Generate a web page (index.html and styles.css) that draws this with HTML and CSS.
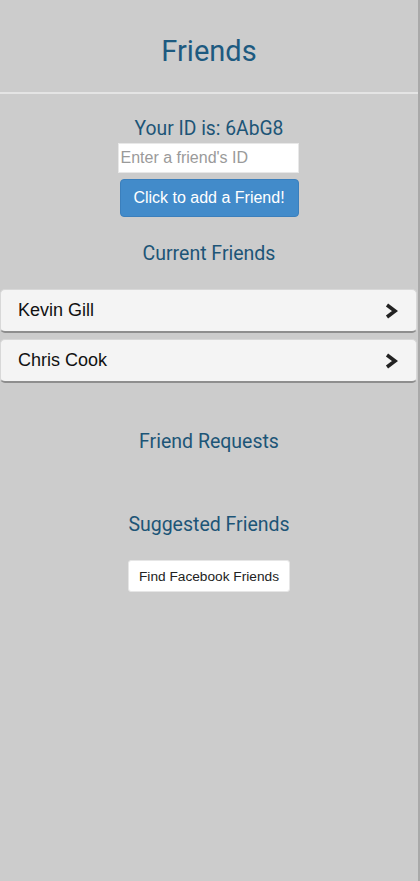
FILE: index.html
```html
<!DOCTYPE html>
<html>
<head>
<meta charset="utf-8">
<link rel="stylesheet" href="styles.css">
</head>
<body>
<div class="page">
  <header class="bar">
    <h1 class="title">Friends</h1>
  </header>
  <main class="content">
    <section class="add">
      <div class="my-id">Your ID is: 6AbG8</div>
      <input class="id-input" type="text" placeholder="Enter a friend's ID">
      <button class="btn-primary">Click to add a Friend!</button>
    </section>
    <h2 class="section-title current">Current Friends</h2>
    <ul class="friend-list">
      <li class="friend">
        <span class="friend-name">Kevin Gill</span>
        <svg class="chev" width="14" height="16" viewBox="0 0 14 16"><path d="M3 2 L11 8 L3 14" fill="none" stroke="#222" stroke-width="3.6" stroke-linejoin="miter"/></svg>
      </li>
      <li class="friend">
        <span class="friend-name">Chris Cook</span>
        <svg class="chev" width="14" height="16" viewBox="0 0 14 16"><path d="M3 2 L11 8 L3 14" fill="none" stroke="#222" stroke-width="3.6" stroke-linejoin="miter"/></svg>
      </li>
    </ul>
    <h2 class="section-title requests">Friend Requests</h2>
    <h2 class="section-title suggested">Suggested Friends</h2>
    <div class="fb-wrap">
      <button class="btn-default">Find Facebook Friends</button>
    </div>
  </main>
</div>
</body>
</html>
```

FILE: styles.css
```css
html, body {
  margin: 0;
  padding: 0;
  background: #cccccc;
}
body {
  width: 420px;
  height: 881px;
  overflow: hidden;
}
.page {
  width: 418px;
  height: 881px;
  border-right: 2px solid #a9a9a9;
  background: #cccccc;
}
.bar {
  height: 92px;
  border-bottom: 2px solid #e4e4e4;
  display: flex;
  align-items: center;
  justify-content: center;
}
.title {
  margin: 0;
  padding-top: 10px;
  font-family: Roboto, sans-serif;
  font-weight: 400;
  font-size: 29px;
  color: #1d5a80;
}
.content {
  display: flex;
  flex-direction: column;
  align-items: center;
}
.add {
  display: flex;
  flex-direction: column;
  align-items: center;
  padding-top: 23px;
}
.my-id {
  font-family: Roboto, sans-serif;
  font-size: 19.3px;
  line-height: 24px;
  color: #1d5577;
}
.id-input {
  box-sizing: border-box;
  width: 181px;
  height: 30px;
  margin-top: 2px;
  margin-left: -2px;
  border: 1px solid #e8e8e8;
  background: #fff;
  padding: 0 2px;
  font-family: "Liberation Sans", Arial, sans-serif;
  font-size: 16px;
  color: #333;
  outline: none;
}
.id-input::placeholder {
  color: #9a9a9a;
}
.btn-primary {
  box-sizing: border-box;
  width: 179px;
  height: 38px;
  margin-top: 6px;
  border: 1px solid #3b7fbc;
  border-radius: 4px;
  background: #428bca;
  color: #fff;
  font-family: "Liberation Sans", Arial, sans-serif;
  font-size: 16px;
  padding: 0;
}
.section-title {
  margin: 0;
  font-family: Roboto, sans-serif;
  font-weight: 400;
  font-size: 19.5px;
  line-height: 24px;
  color: #1d5577;
}
.current {
  margin-top: 25px;
}
.friend-list {
  list-style: none;
  margin: 23px 0 0 0;
  padding: 0;
  width: 418px;
  display: flex;
  flex-direction: column;
  gap: 6px;
}
.friend {
  box-sizing: border-box;
  height: 44px;
  width: 417px;
  background: #f4f4f4;
  border-radius: 5px;
  border: 1px solid #d8d8d8;
  border-bottom: 2px solid #8e8e8e;
  display: flex;
  align-items: center;
  justify-content: space-between;
  padding: 0 18px 0 17px;
}
.friend-name {
  font-family: "Liberation Sans", Arial, sans-serif;
  font-size: 18px;
  color: #111;
}
.chev {
  display: block;
}
.requests {
  margin-top: 47px;
}
.suggested {
  margin-top: 59px;
}
.fb-wrap {
  margin-top: 23px;
}
.btn-default {
  box-sizing: border-box;
  width: 162px;
  height: 32px;
  border: 1px solid #e6e6e6;
  border-radius: 3px;
  background: #fff;
  color: #222;
  font-family: "Liberation Sans", Arial, sans-serif;
  font-size: 13.7px;
  padding: 0;
}
```
